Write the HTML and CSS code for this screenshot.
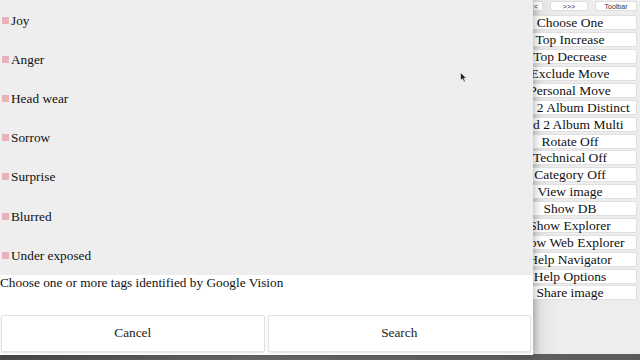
FILE: index.html
```
<!DOCTYPE html>
<html lang="en">
<head>
    <meta charset="UTF-8">
    <meta name="viewport" content="width=device-width, initial-scale=1.0">
    <title>Tags - Google Vision</title>
    <link rel="stylesheet" href="styles.css">
</head>
<body>
    <div class="screen">
        <div class="app">
            <div class="main"></div>

            <div class="sidebar">
                <div class="toolrow">
                    <button class="tool">&lt;&lt;&lt;</button>
                    <button class="tool">&gt;&gt;&gt;</button>
                    <button class="tool">Toolbar</button>
                </div>
                <button class="side-btn">Choose One</button>
                <button class="side-btn">Top Increase</button>
                <button class="side-btn">Top Decrease</button>
                <button class="side-btn">Exclude Move</button>
                <button class="side-btn">Personal Move</button>
                <button class="side-btn">Add 2 Album Distinct</button>
                <button class="side-btn">Add 2 Album Multi</button>
                <button class="side-btn">Rotate Off</button>
                <button class="side-btn">Technical Off</button>
                <button class="side-btn">Category Off</button>
                <button class="side-btn">View image</button>
                <button class="side-btn">Show DB</button>
                <button class="side-btn">Show Explorer</button>
                <button class="side-btn">Show Web Explorer</button>
                <button class="side-btn">Help Navigator</button>
                <button class="side-btn">Help Options</button>
                <button class="side-btn">Share image</button>
            </div>
        </div>

        <!-- modal dialog over the app -->
        <div class="dialog">
            <ul class="tag-list">
                <li class="tag"><span class="mark"></span>Joy</li>
                <li class="tag"><span class="mark"></span>Anger</li>
                <li class="tag"><span class="mark"></span>Head wear</li>
                <li class="tag"><span class="mark"></span>Sorrow</li>
                <li class="tag"><span class="mark"></span>Surprise</li>
                <li class="tag"><span class="mark"></span>Blurred</li>
                <li class="tag"><span class="mark"></span>Under exposed</li>
            </ul>
            <p class="hint">Choose one or more tags identified by Google Vision</p>
            <div class="actions">
                <button class="action">Cancel</button>
                <button class="action">Search</button>
            </div>
        </div>

        <svg class="cursor" width="8" height="11" viewBox="0 0 8 11">
            <path d="M0.5 0.5 L0.5 8.5 L2.5 6.8 L4 10 L5.3 9.4 L3.9 6.3 L6.5 6.3 Z" fill="#222" stroke="#fff" stroke-width="0.6"/>
        </svg>

        <div class="taskbar"></div>
    </div>
</body>
</html>
```

FILE: styles.css
```
body {
    margin: 0;
    padding: 0;
    background-color: #ededed;
    font-family: "Liberation Serif", "Times New Roman", serif;
}

.screen {
    position: relative;
    width: 640px;
    height: 360px;
    overflow: hidden;
}

.app {
    display: flex;
    height: 354px;
    background: linear-gradient(to right, #d8d8d8 533px, #e4e4e4 540px, #ededed 560px);
}

.main {
    width: 503px;
    flex-shrink: 0;
}

.sidebar {
    width: 134px;
    display: flex;
    flex-direction: column;
    gap: 1.875px;
}

.toolrow {
    display: flex;
    justify-content: flex-end;
    gap: 7px;
    height: 12px;
    padding-top: 1px;
    margin-bottom: 0.6px;
}

.tool {
    height: 10px;
    padding: 0;
    font-family: "Liberation Sans", Arial, sans-serif;
    font-size: 7px;
    color: #333;
    background-color: #fff;
    border: 1px solid #ddd;
    border-radius: 2px;
}

.tool:nth-child(1) {
    width: 22px;
}

.tool:nth-child(2) {
    width: 38px;
}

.tool:nth-child(3) {
    width: 42px;
}

.side-btn {
    height: 15px;
    padding: 0;
    font-family: "Liberation Serif", "Times New Roman", serif;
    font-size: 13.5px;
    line-height: 13px;
    color: #111;
    background-color: #fff;
    border: 1px solid #e0e0e0;
    border-radius: 2px;
    white-space: nowrap;
    overflow: visible;
    text-align: center;
}

.dialog {
    position: absolute;
    left: 0;
    top: 0;
    width: 533px;
    height: 355px;
    background-color: #fff;
    box-shadow: 2px 0 8px rgba(0, 0, 0, 0.25);
}

.tag-list {
    list-style: none;
    margin: 0;
    padding: 0.6px 0 0;
    background-color: #eeeeee;
}

.tag {
    height: 39.2px;
    line-height: 39.2px;
    font-size: 13.3px;
    color: #111;
    display: flex;
    align-items: center;
}

.mark {
    width: 7px;
    height: 7px;
    margin: 0 2px 0 2px;
    background-color: #e9b3bb;
}

.hint {
    margin: 0;
    font-size: 13.3px;
    line-height: 15px;
    color: #111;
}

.actions {
    display: flex;
    gap: 3px;
    padding: 25px 2px 0 1px;
}

.action {
    flex: 1;
    height: 37px;
    font-family: "Liberation Serif", "Times New Roman", serif;
    font-size: 13.3px;
    color: #222;
    background-color: #fff;
    border: 1px solid #e2e2e2;
    border-radius: 2px;
    box-shadow: 0 1px 2px rgba(0, 0, 0, 0.12);
}

.cursor {
    position: absolute;
    left: 460px;
    top: 72px;
}

.taskbar {
    height: 6px;
    background: linear-gradient(to right, #4a4a4a, #6a6a6a 40%, #5a5a5a);
}
```
